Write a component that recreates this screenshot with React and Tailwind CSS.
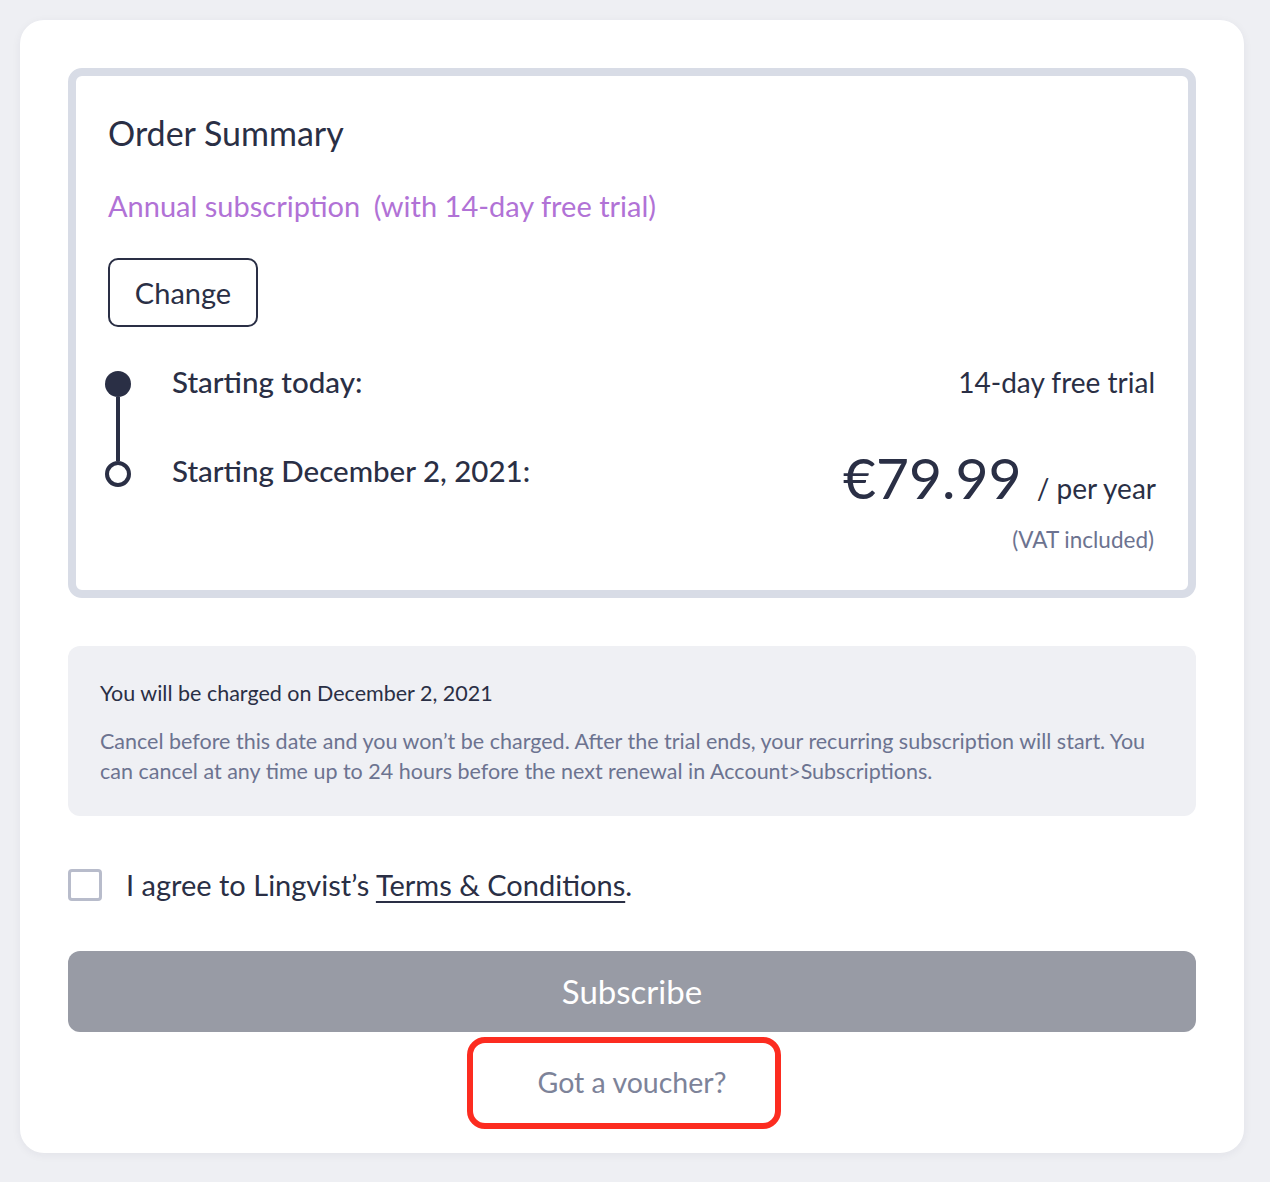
import { useState } from 'react';

const font = { fontFamily: 'Lato, "Open Sans", sans-serif' };

function Timeline() {
  return (
    <div className="flex flex-col items-center w-[26px] shrink-0 -ml-[3px] pt-[2px]">
      <div className="w-[26px] h-[26px] rounded-full bg-[#2a2f45]" />
      <div className="w-[4px] h-[64px] bg-[#2a2f45]" />
      <div className="w-[26px] h-[26px] rounded-full border-[4px] border-[#2a2f45] bg-white" />
    </div>
  );
}

export default function App() {
  const [agreed, setAgreed] = useState(false);

  return (
    <div className="min-h-screen bg-[#eeeff3] p-5 text-[#2a2f45]" style={font}>
      <div className="w-[1224px] bg-white rounded-[24px] shadow-[0_2px_10px_rgba(30,40,70,0.06)] px-12 pt-12 pb-6">
        <div className="border-[8px] border-[#d8dce6] rounded-[14px] px-[32px] pt-[37px] pb-[33px]">
          <h2 className="text-[34px] leading-[40px] text-[#2a2f45]">Order Summary</h2>
          <p className="mt-[35px] text-[29px] leading-[36px] text-[#b172d6]">
            Annual subscription <span className="ml-[6px]">(with 14-day free trial)</span>
          </p>
          <button className="mt-[34px] h-[69px] w-[150px] rounded-[10px] border-2 border-[#2a2f45] text-[29px] text-[#2a2f45]">
            Change
          </button>

          <div className="mt-[42px] flex gap-[41px]">
            <Timeline />
            <div className="flex-1">
              <div className="flex justify-between items-center h-[30px] -mt-[2px]">
                <span className="text-[29.5px] font-medium">Starting today:</span>
                <span className="text-[28px] pr-[1px]">14-day free trial</span>
              </div>
              <div className="flex justify-between items-start mt-[52px]">
                <span className="text-[29.5px] font-medium leading-[36px] mt-[4px]">Starting December 2, 2021:</span>
                <div className="flex flex-col items-end -mt-[8px]">
                  <div className="flex items-baseline gap-[15px]">
                    <span className="text-[57px] leading-[72px]">€79.99</span>
                    <span className="text-[28px]">/ per year</span>
                  </div>
                  <span className="mt-[10px] text-[22.5px] text-[#6c7390] pr-[2px]">(VAT included)</span>
                </div>
              </div>
            </div>
          </div>
        </div>

        <div className="mt-12 rounded-[12px] bg-[#eff0f4] px-8 pt-[32px] pb-[30px]">
          <p className="text-[21.5px] leading-[30px] text-[#2a2f45]">You will be charged on December 2, 2021</p>
          <p className="mt-[18px] text-[21.5px] leading-[30px] text-[#6c7390]">
            Cancel before this date and you won’t be charged. After the trial ends, your recurring subscription will start. You
            can cancel at any time up to 24 hours before the next renewal in Account&gt;Subscriptions.
          </p>
        </div>

        <label className="mt-[51px] flex items-center gap-[24px] cursor-pointer">
          <input type="checkbox" checked={agreed} onChange={(e) => setAgreed(e.target.checked)} className="sr-only" />
          <span className="w-[34px] h-[32px] rounded-[4px] border-[3px] border-[#b8bccb] bg-white shrink-0" />
          <span className="text-[29px] leading-[36px]">
            I agree to Lingvist’s <span className="underline underline-offset-[5px] decoration-2">Terms &amp; Conditions</span>.
          </span>
        </label>

        <button className="mt-[48px] w-full h-[81px] rounded-[12px] bg-[#989ba5] text-white text-[33px]">
          Subscribe
        </button>

        <div className="mt-[5px] flex justify-center pr-[16px]">
          <button className="w-[314px] h-[92px] pl-[16px] rounded-[18px] border-[6px] border-[#fc2c20] text-[28.5px] text-[#7d8399]">
            Got a voucher?
          </button>
        </div>
      </div>
    </div>
  );
}
